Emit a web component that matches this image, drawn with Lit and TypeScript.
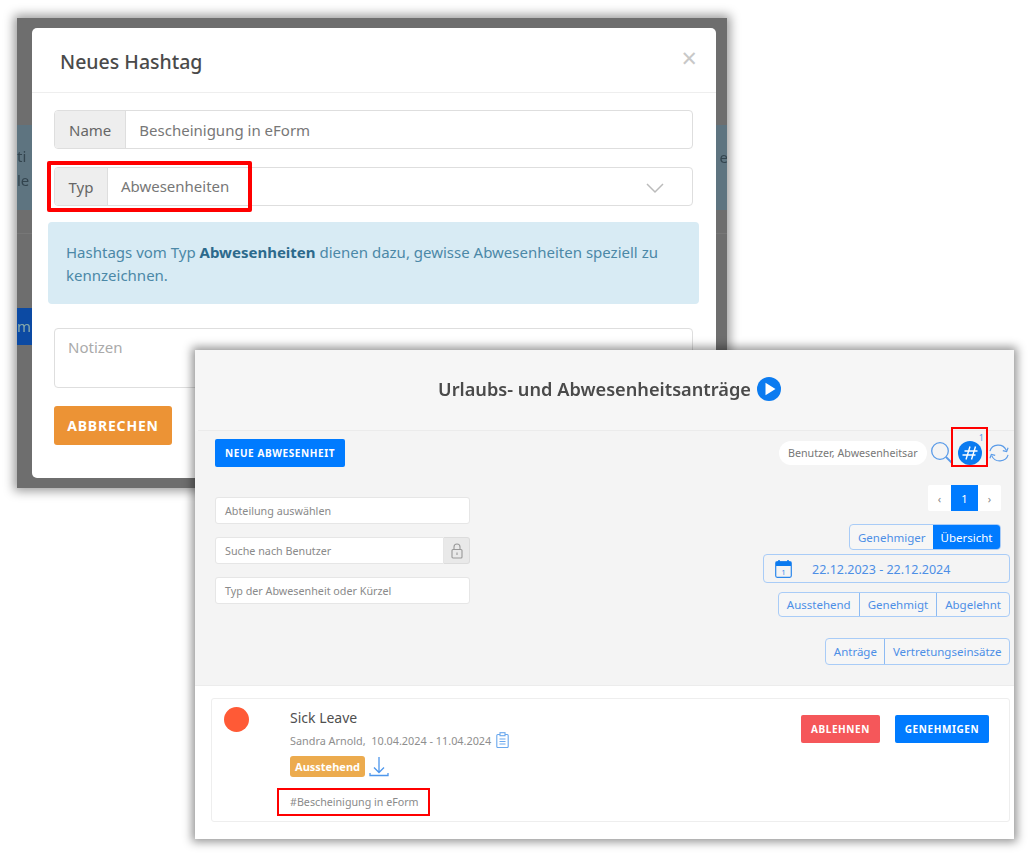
import { LitElement, html, css } from "lit";
import { customElement } from "lit/decorators.js";

@customElement("app-root")
export class AppRoot extends LitElement {
  static styles = css`
    :host { display: block; width: 1030px; height: 858px; position: relative; overflow: hidden; background: #fff;
      font-family: "Noto Sans", "Open Sans", sans-serif; }
    * { box-sizing: border-box; }
    .stage { width: 1030px; height: 858px; position: relative; filter: blur(0.5px); }

    /* back window */
    .back { position: absolute; left: 17px; top: 18px; width: 710px; height: 470px; background: #6e6e6e;
      box-shadow: 0 0 10px 3px rgba(0,0,0,.4); overflow: hidden; display: flex; flex-direction: column; padding-top: 107px; }
    .band { height: 85px; background: #5e7480; color: #33444e; font-size: 15px; line-height: 24px; display: flex; justify-content: space-between; align-items: center; }
    .band .r { margin-right: -1px; margin-bottom: 22px; }
    .line { height: 1px; background: #777; margin-top: 23px; }
    .bluebtn { width: 30px; height: 37px; margin-top: 74px; background: #0c4aa3; color: #8aa; font-size: 15px; line-height: 37px; }
    .dialog { position: absolute; left: 15px; top: 10px; width: 684px; height: 450px; background: #fff; border-radius: 5px; }
    .dhead { height: 65px; border-bottom: 1px solid #eee; padding: 16px 28px 0; display: flex; justify-content: space-between; align-items: flex-start; }
    .dhead h2 { margin: 0; font-size: 19.5px; font-weight: 500; line-height: 36px; color: #4a4a4a; }
    .close { font-size: 27px; line-height: 28px; color: #c8c8c8; font-weight: 400; margin: 0 -9px 0 0; }
    .dbody { padding: 17px 23px 0 22px; display: flex; flex-direction: column; }
    .group { display: flex; height: 39px; border: 1px solid #dedede; border-radius: 4px; overflow: hidden; font-size: 15px; }
    .group + .group { margin-top: 18px; }
    .addon { background: #eeeeee; border-right: 1px solid #dedede; color: #666; padding: 0 14px; display: flex; align-items: center; }
    .addon.ty { padding: 0 13.500px; }
    .value { flex: 1; padding: 0 13px; display: flex; align-items: center; color: #777; justify-content: space-between; }
    .typ { margin-top: -2px; }
    .chev { width: 20px; height: 12px; margin: 2px 14px 0 0; }
    .info { margin: 16px -6px 0; height: 82px; background: #d8ebf4; border-radius: 4px; color: #4b88a7; font-size: 15px; line-height: 23px; padding: 19px 18px; }
    .info b { color: #2c6a8c; font-weight: 700; }
    .notes { margin-top: 24px; height: 60px; border: 1px solid #dedede; border-radius: 4px; padding: 6px 13px; color: #aaa; font-size: 15px; line-height: 24px; }
    .abort { margin-top: 18px; width: 118px; height: 39px; background: #ec9335; color: #fff; border-radius: 3px; font-size: 14px; font-weight: 700; letter-spacing: .8px; display: flex; align-items: center; justify-content: center; }
    .redtyp { position: absolute; left: 15px; top: 133px; width: 205px; height: 51px; border: 4px solid #f00; border-radius: 2px; }

    /* front window */
    .front { position: absolute; left: 195px; top: 350px; width: 819px; height: 489px; background: #f6f6f6;
      box-shadow: 0 0 9px 3px rgba(0,0,0,.42); display: flex; flex-direction: column; }
    .fhead { height: 81px; margin-left: 3px; border-bottom: 1px solid #ebebeb; display: flex; align-items: center; justify-content: center; gap: 6px; padding: 0 0 2px 7px; }
    .fhead h1 { margin: 0; font-size: 18.2px; font-weight: 600; color: #4a4a4a; }
    .tools { height: 254px; display: flex; justify-content: space-between; padding: 8px 4px 0 20px; background: #f4f4f4; }
    .left { width: 255px; display: flex; flex-direction: column; }
    .newbtn { width: 130px; height: 28px; background: #007bff; color: #fff; border-radius: 2px; font-size: 10px; font-weight: 700; letter-spacing: .6px; display: flex; align-items: center; justify-content: center; }
    .field { height: 27px; background: #fff; border: 1px solid #e6e6e6; border-radius: 3px; font-size: 10.75px; color: #8a8a8a; padding: 0 9px; display: flex; align-items: center; margin-top: 13px; }
    .newbtn + .field { margin-top: 30px; }
    .lockrow { display: flex; margin-top: 13px; }
    .lockrow .field { flex: 1; margin-top: 0; border-radius: 3px 0 0 3px; }
    .lock { width: 26px; height: 27px; background: #e9e9e9; border: 1px solid #dcdcdc; border-left: 0; border-radius: 0 3px 3px 0; display: flex; align-items: center; justify-content: center; }
    .right { display: flex; flex-direction: column; align-items: flex-end; }
    .searchrow { display: flex; align-items: center; height: 28px; }
    .pill { width: 148px; height: 24px; border-radius: 12px; background: #fff; color: #777; font-size: 10.7px; padding: 0 9px; display: flex; align-items: center; white-space: nowrap; overflow: hidden; }
    .hashwrap { position: relative; width: 36px; height: 28px; margin-left: -1px; display: flex; align-items: center; justify-content: center; }
    .hash { width: 24px; height: 24px; flex: none; display: block; }
    .redhash { position: absolute; left: -1px; top: -12px; width: 37px; height: 40px; border: 2px solid #f00; }
    .count { position: absolute; right: 4px; top: -8px; font-size: 9px; color: #5a9be8; }
    .pager { display: flex; margin: 18px 9px 0 0; height: 26px; background: #fff; border-radius: 2px; font-size: 11px; color: #888; }
    .pager span { width: 23px; display: flex; align-items: center; justify-content: center; }
    .pager .on { width: 27px; background: #007bff; color: #fff; }
    .btns { display: flex; height: 26px; border: 1px solid #a9ccf7; border-radius: 4px; font-size: 11.5px; color: #4d8fe6; background: #f6f6f6; overflow: hidden; }
    .btns span { padding: 0 8px; display: flex; align-items: center; white-space: nowrap; }
    .btns span + span { border-left: 1px solid #8dbbf3; }
    .btns .on { background: #007bff; color: #fff; border-left: 0; }
    .b1 { margin: 13px 9px 0 0; }
    .b1 span, .b3 span { padding: 0 7.500px; }
    .date { width: 247px; height: 29px; margin-top: 4px; border: 1px solid #a9ccf7; border-radius: 4px; display: flex; align-items: center; color: #4d8fe6; font-size: 12.5px; }
    .date svg { margin: 0 0 0 11px; }
    .date span { margin: 1px 0 0 20px; }
    .b2 { margin-top: 9px; height: 25px; }
    .b3 { margin-top: 21px; height: 27px; }

    .lower { flex: 1; background: #fff; border-top: 1px solid #ececec; padding: 12px 4px 17px 16px; display: flex; }
    .card { flex: 1; border: 1px solid #eeeeee; border-radius: 3px; display: flex; justify-content: space-between; padding: 8px 20px 0 12px; }
    .cl { display: flex; }
    .dot { width: 25px; height: 25px; border-radius: 50%; background: #ff5a36; }
    .info2 { margin-left: 41px; display: flex; flex-direction: column; align-items: flex-start; }
    .t { font-size: 14px; line-height: 20px; margin-top: 1px; color: #4f4f4f; }
    .sub { display: flex; align-items: center; font-size: 10.85px; color: #8e8e8e; margin-top: 2px; height: 20px; gap: 5px; white-space: pre; }
    .badges { display: flex; align-items: center; gap: 4px; margin-top: 6px; }
    .badge { width: 75px; height: 21px; background: #ecab4e; color: #fff; border-radius: 3px; font-size: 11px; font-weight: 700; display: flex; align-items: center; justify-content: center; }
    .tag { position: relative; font-size: 10.7px; color: #8a8a8a; margin-top: 15px; line-height: 16px; }
    .redtag { position: absolute; left: -13px; top: -4px; width: 153px; height: 28px; border: 2px solid #f00; }
    .tagtext { display: block; padding-top: 2px; }
    .cr { display: flex; gap: 15px; margin-top: 8px; }
    .act { height: 28px; border-radius: 2px; color: #fff; font-size: 10px; font-weight: 700; letter-spacing: .6px; display: flex; align-items: center; justify-content: center; }
    .rej { width: 79px; background: #f5575a; }
    .ok { width: 94px; background: #007bff; }
  `;

  render() {
    return html`<div class="stage">
      <div class="back">
        <div class="band"><div>ti<br />le</div><div class="r">e</div></div>
        <div class="line"></div>
        <div class="bluebtn">m</div>
        <div class="dialog">
          <div class="dhead"><h2>Neues Hashtag</h2><span class="close">×</span></div>
          <div class="dbody">
            <div class="group"><div class="addon">Name</div><div class="value">Bescheinigung in eForm</div></div>
            <div class="group"><div class="addon ty">Typ</div><div class="value"><span class="typ">Abwesenheiten</span>
              <svg class="chev" viewBox="0 0 20 12" fill="none" stroke="#bbb" stroke-width="1.5"><path d="M2 2l8 8 8-8" /></svg></div></div>
            <div class="info">Hashtags vom Typ <b>Abwesenheiten</b> dienen dazu, gewisse Abwesenheiten speziell zu kennzeichnen.</div>
            <div class="notes">Notizen</div>
            <div class="abort">ABBRECHEN</div>
          </div>
          <div class="redtyp"></div>
        </div>
      </div>

      <div class="front">
        <div class="fhead"><h1>Urlaubs- und Abwesenheitsanträge</h1>
          <svg width="24" height="24" viewBox="0 0 24 24"><circle cx="12" cy="12" r="12" fill="#0b7bf0" /><path d="M8.5 5.8L18.5 12 8.5 18.2z" fill="#fff" /></svg></div>
        <div class="tools">
          <div class="left">
            <div class="newbtn">NEUE ABWESENHEIT</div>
            <div class="field">Abteilung auswählen</div>
            <div class="lockrow"><div class="field">Suche nach Benutzer</div>
              <div class="lock"><svg width="12" height="16" viewBox="0 0 12 16" fill="none" stroke="#999" stroke-width="1.1"><rect x="1" y="6.5" width="10" height="8.5" rx="1" /><path d="M3 6.5V4a3 3 0 016 0v2.5M6 9.5v2.500" /></svg></div></div>
            <div class="field">Typ der Abwesenheit oder Kürzel</div>
          </div>
          <div class="right">
            <div class="searchrow">
              <div class="pill">Benutzer, Abwesenheitsar</div>
              <svg style="margin-left:3px" width="23" height="24" viewBox="0 0 23 24" fill="none" stroke="#5a9be8" stroke-width="1.3"><circle cx="10" cy="10" r="8.3" /><path d="M16 16l6 6" stroke-width="1.8" /></svg>
              <div class="hashwrap">
                <svg class="hash" viewBox="0 0 24 24"><circle cx="12" cy="12" r="12" fill="#0b7bf0" /><path d="M12 5.500L8 18.500M17.500 5.500l-4 13M6.500 10H19.500M4.500 14h13" stroke="#fff" stroke-width="1.400" fill="none" /></svg>
                <div class="redhash"></div><span class="count">1</span>
              </div>
              <svg width="22" height="22" viewBox="0 0 23 22" fill="none" stroke="#5a9be8" stroke-width="1.200"><path d="M2 9A9 8.500 0 0 1 19 8M21 13A9 8.500 0 0 1 4 14M15.500 8.500l4 1 1.500-4M7.500 13.500l-4-1-1.500 4" /></svg>
            </div>
            <div class="pager"><span>‹</span><span class="on">1</span><span>›</span></div>
            <div class="btns b1"><span>Genehmiger</span><span class="on">Übersicht</span></div>
            <div class="date">
              <svg width="17" height="18" viewBox="0 0 17 18"><rect x=".7" y="1.500" width="15.600" height="15.800" rx="1.500" fill="none" stroke="#2b87ec" stroke-width="1.200" /><path d="M1 2h15v4H1z" fill="#0b7bf0" /><path d="M4 0v3M13 0v3" stroke="#0b7bf0" stroke-width="1.500" /><text x="8.500" y="14.500" font-size="7" text-anchor="middle" fill="#2b87ec" font-family="Noto Sans">1</text></svg>
              <span>22.12.2023 - 22.12.2024</span>
            </div>
            <div class="btns b2"><span>Ausstehend</span><span>Genehmigt</span><span>Abgelehnt</span></div>
            <div class="btns b3"><span>Anträge</span><span>Vertretungseinsätze</span></div>
          </div>
        </div>
        <div class="lower">
          <div class="card">
            <div class="cl">
              <div class="dot"></div>
              <div class="info2">
                <div class="t">Sick Leave</div>
                <div class="sub"><span>Sandra Arnold,  10.04.2024 - 11.04.2024</span>
                  <svg width="13" height="16" viewBox="0 0 13 16" fill="none" stroke="#6aa8ee" stroke-width="1.100"><rect x=".8" y="2.500" width="11.400" height="13" rx="1" /><rect x="4" y=".7" width="5" height="3" fill="#fff" /><path d="M3.500 7h6M3.500 9.500h6M3.500 12h6" /></svg></div>
                <div class="badges"><div class="badge">Ausstehend</div>
                  <svg width="20" height="21" viewBox="0 0 20 21" fill="none" stroke="#4d96ec" stroke-width="1.300"><path d="M10 1v15M5 11.500l5 5 5-5M1 17v2.500h18V17" /></svg></div>
                <div class="tag"><span class="tagtext">#Bescheinigung in eForm</span><div class="redtag"></div></div>
              </div>
            </div>
            <div class="cr"><div class="act rej">ABLEHNEN</div><div class="act ok">GENEHMIGEN</div></div>
          </div>
        </div>
      </div>
    </div>`;
  }
}
